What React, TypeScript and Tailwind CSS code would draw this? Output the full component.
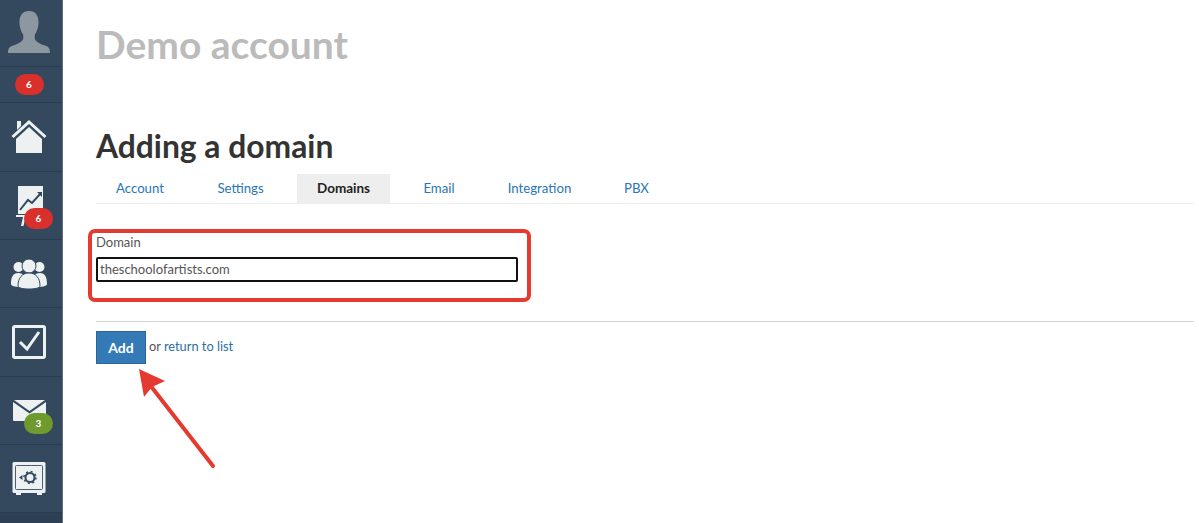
const navRow = "relative flex shrink-0 items-center justify-center border-b border-[#2b3e51] pr-[4px]";
const badge = "absolute flex h-[21px] w-[29px] items-center justify-center rounded-full text-[10px] font-bold text-white";

function Sidebar() {
  return (
    <aside className="flex h-[523px] w-[63px] shrink-0 flex-col border-r border-[#5d6f80] bg-[#34495e]">
      <div className="flex h-[67px] shrink-0 items-center justify-center border-b border-[#2b3e51] pr-[4px]">
        <svg width="44" height="42" viewBox="0 0 46 44" className="mt-[-2px]">
          <path
            d="M23 0c-7 0-10 5-10 12 0 5 2 10 4 13v4c-1 3-5 5-10 7-4 1-6 3-6 8h44c0-5-2-7-6-8-5-2-9-4-10-7v-4c2-3 4-8 4-13 0-7-3-12-10-12z"
            fill="#8d979f"
          />
        </svg>
      </div>
      <div className="flex h-[36px] shrink-0 items-center justify-center border-b border-[#2b3e51] pr-[4px]">
        <span className="flex h-[21px] w-[29px] items-center justify-center rounded-full bg-[#d9302c] text-[10px] font-bold text-white">
          6
        </span>
      </div>
      <div className={`${navRow} h-[69px]`}>
        <svg width="36" height="34" viewBox="0 0 36 34">
          <path d="M6 1h4v5l-4 4z" fill="#edf1f2" />
          <path d="M1.500 17 18 2l16.500 15" fill="none" stroke="#edf1f2" strokeWidth="3" />
          <path d="M18 7 31 19v14H5V19z" fill="#edf1f2" />
        </svg>
      </div>
      <div className={`${navRow} h-[68px]`}>
        <svg width="28" height="42" viewBox="0 0 28 42" className="ml-[2px] mt-[2px]">
          <path d="M2 0h25v28H2z" fill="#edf1f2" />
          <path d="M4 24 12 14l4 3 9-10" fill="none" stroke="#34495e" strokeWidth="2" />
          <path d="M21 6h5v5z" fill="#34495e" />
          <path d="M0 29h17v2H0zM7 31h2.500l-2 9H5z" fill="#edf1f2" />
        </svg>
        <span className={`${badge} left-[24px] top-[36px] bg-[#d9302c]`}>6</span>
      </div>
      <div className={`${navRow} h-[68px]`}>
        <svg width="36" height="30" viewBox="0 0 36 30">
          <circle cx="7.500" cy="8" r="5" fill="#edf1f2" />
          <circle cx="28.500" cy="8" r="5" fill="#edf1f2" />
          <path d="M0 25c0-7 2-11 7-11 3 0 5 1 6 3l-4 11c-5 0-9-1-9-3zM36 25c0-7-2-11-7-11-3 0-5 1-6 3l4 11c5 0 9-1 9-3z" fill="#edf1f2" />
          <circle cx="18" cy="7" r="7" stroke="#34495e" strokeWidth="1" fill="#edf1f2" />
          <path d="M7 27c0-8 4-13 11-13s11 5 11 13c0 2-5 3-11 3s-11-1-11-3z" stroke="#34495e" strokeWidth="1" fill="#edf1f2" />
        </svg>
      </div>
      <div className={`${navRow} h-[69px]`}>
        <svg width="34" height="34" viewBox="0 0 34 34">
          <rect x="1.500" y="1.500" width="31" height="31" rx="1.500" fill="#34495e" stroke="#edf1f2" strokeWidth="3" />
          <path d="M8 17l7 7L27 7" fill="none" stroke="#edf1f2" strokeWidth="3" />
        </svg>
      </div>
      <div className={`${navRow} h-[68px]`}>
        <svg width="33" height="21" viewBox="0 0 33 21">
          <path d="M1 0h31L16.500 11z" fill="#edf1f2" />
          <path d="M0 2l16.500 11.500L33 2v18a1 1 0 0 1-1 1H1a1 1 0 0 1-1-1z" fill="#edf1f2" />
        </svg>
        <span className={`${badge} left-[24px] top-[36px] bg-[#6f9a2d]`}>3</span>
      </div>
      <div className={`${navRow} h-[68px]`}>
        <svg width="34" height="34" viewBox="0 0 34 34">
          <rect x="0.500" y="0" width="33" height="31" rx="1.500" fill="#edf1f2" />
          <path d="M4 31h5v2H4zM25 31h5v2h-5z" fill="#edf1f2" />
          <rect x="3.500" y="3.500" width="27" height="24" rx="1" fill="none" stroke="#4b5d6e" strokeWidth="1" />
          <circle cx="18" cy="15.500" r="4.500" fill="none" stroke="#34495e" strokeWidth="2" />
          <circle cx="18" cy="15.500" r="6" fill="none" stroke="#34495e" strokeWidth="1.500" strokeDasharray="2 2.700" />
          <path d="M7 15.500l3.500-2.500v5z" fill="#34495e" />
        </svg>
      </div>
      <div className="flex-1 bg-[#2e4154]" />
    </aside>
  );
}

const tabs = [
  { label: "Account", width: "w-[88px]" },
  { label: "Settings", width: "w-[87px]" },
  { label: "Domains", width: "w-[93px]" },
  { label: "Email", width: "w-[72px]" },
  { label: "Integration", width: "w-[103px]" },
  { label: "PBX", width: "w-[65px]" },
];

export default function App() {
  return (
    <div className="relative flex h-[523px] w-[1199px] overflow-hidden bg-white font-['Lato',sans-serif] text-[#333]">
      <Sidebar />
      <main className="flex-1 pr-[5px]">
        <h2 className="ml-[33px] mt-[21px] text-[39px] font-bold leading-[46px] text-[#bbbbbb]">Demo account</h2>
        <h1 className="ml-[33px] mt-[60px] text-[31.800px] font-bold leading-[38px] text-[#333]">Adding a domain</h1>
        <div className="ml-[33px] mt-[9px] flex h-[30px] gap-[13px] border-b border-[#eeeeee]">
          {tabs.map((tab) => (
            <a
              key={tab.label}
              className={
                tab.label === "Domains"
                  ? `flex ${tab.width} items-center justify-center bg-[#eeeeee] text-[13.500px] font-bold text-[#222]`
                  : `flex ${tab.width} items-center justify-center text-[13.200px] text-[#2a76b4]`
              }
            >
              {tab.label}
            </a>
          ))}
        </div>
        <form className="ml-[25px] mt-[25px] h-[73px] w-[443px] rounded-[7px] border-[4px] border-[#e53a30] pl-[4px] pr-[9px]">
          <label className="block text-[13px] leading-[18px] text-[#555]">Domain</label>
          <input
            readOnly
            value="theschoolofartists.com"
            className="mt-[6px] block h-[25px] w-full rounded-[2px] border-2 border-[#111] px-[2px] pb-[2px] text-[13px] text-[#555] outline-none"
          />
        </form>
        <div className="ml-[33px] mt-[19px] flex items-start gap-[3px] border-t border-[#d4d4d4] pt-[9px]">
          <button className="h-[33px] w-[50px] border border-[#2a659c] bg-[#337ab7] text-[14px] font-bold text-white">Add</button>
          <p className="mt-[6px] text-[12.800px] leading-[18px] text-[#555]">
            or <a className="text-[#2a6f9f]">return to list</a>
          </p>
        </div>
      </main>
      <svg width="90" height="110" viewBox="0 0 90 110" className="absolute left-[135px] top-[366px]">
        <path d="M4 3 30 15 17 21 9 31z" fill="#e53a30" />
        <path d="M15 19 78 100" stroke="#e53a30" strokeWidth="4" strokeLinecap="round" />
      </svg>
    </div>
  );
}
